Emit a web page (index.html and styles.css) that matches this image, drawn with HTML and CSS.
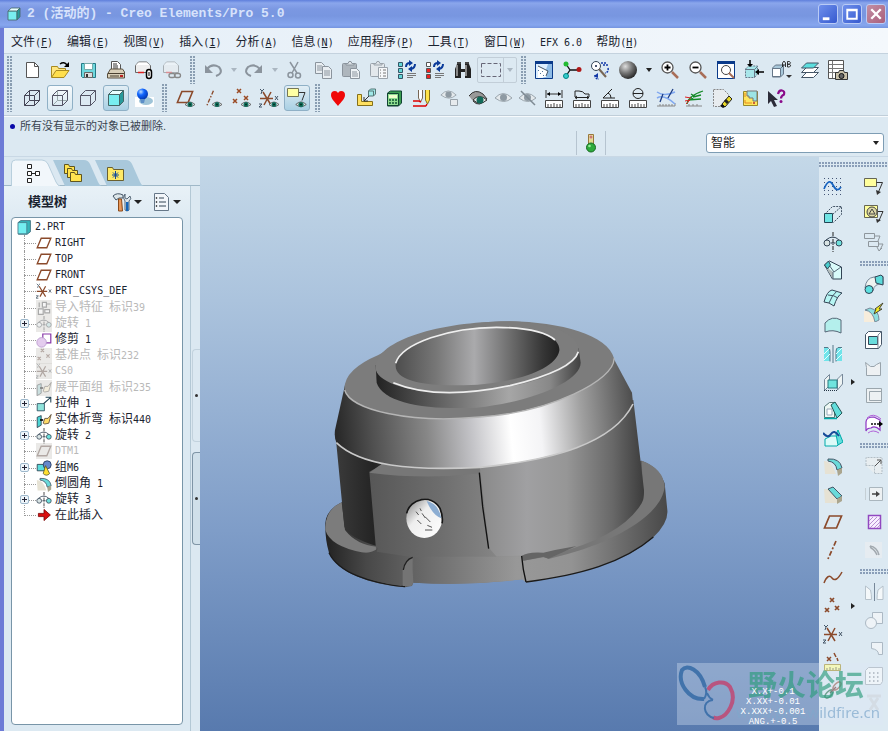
FILE: index.html
```html
<!DOCTYPE html>
<html lang="zh-CN">
<head>
<meta charset="utf-8">
<title>2 (活动的) - Creo Elements/Pro 5.0</title>
<link rel="stylesheet" href="styles.css">
</head>
<body>
<svg class="defs" aria-hidden="true">
<defs>
<radialGradient id="gBall" cx=".35" cy=".3" r=".75"><stop offset="0" stop-color="#ddd"/><stop offset=".5" stop-color="#777"/><stop offset="1" stop-color="#222"/></radialGradient>
<radialGradient id="gBlue" cx=".35" cy=".3" r=".75"><stop offset="0" stop-color="#bdf"/><stop offset=".4" stop-color="#16f"/><stop offset="1" stop-color="#03a"/></radialGradient>
</defs>
<symbol id="eye" viewBox="0 0 12 8"><path d="M0 4Q6-2 12 4Q6 9 0 4Z" fill="#dfe8e8" stroke="#555"/><circle cx="6" cy="4" r="3" fill="#147060"/><circle cx="6" cy="4" r="1.2" fill="#032"/></symbol>
<symbol id="new" viewBox="0 0 20 20"><path d="M4.500 2.500h8l4 4v11h-12z" fill="#fff" stroke="#555"/><path d="M12.500 2.500v4h4" fill="none" stroke="#555"/></symbol>
<symbol id="open" viewBox="0 0 20 20"><path d="M1.500 17V6.500h6l1 2h7V11" fill="#ffe680" stroke="#a88a20"/><path d="M1.500 17.500L6 10.500h13l-5 7z" fill="#ffdf4d" stroke="#a88a20"/><path d="M10 4q4-3 7 1" fill="none" stroke="#000" stroke-width="1.500"/><path d="M19 2v5h-5z"/></symbol>
<symbol id="save" viewBox="0 0 20 20"><path d="M3.500 3.500h14v14h-13l-1-1z" fill="#6fd8de" stroke="#247a86"/><path d="M6.500 3.500h8v6h-8z" fill="#fff" stroke="#7aa"/><path d="M6.500 12.500h8v5h-8z" fill="#ddd" stroke="#666"/><path d="M8 14h2v3H8z" fill="#333"/></symbol>
<symbol id="print" viewBox="0 0 20 20"><path d="M5.500 9V1.500h6l3 3V9" fill="#fff" stroke="#555"/><path d="M7 4h4M7 6h5M7 8h5" stroke="#333"/><path d="M1.500 14l3-5h12l2 3v6h-17z" fill="#d8cfb8" stroke="#5a5040"/><path d="M2 13.500h16M4 16h9" stroke="#4a4030"/><path d="M14 15h3v2h-3z" fill="#b22"/></symbol>
<symbol id="mail" viewBox="0 0 20 20"><path d="M1.500 12.500V5.500l3-3.500h8l4 3.500v7z" fill="#eee" stroke="#666"/><path d="M2 5l2.500-2.500h8L16 5z" fill="#fff"/><path d="M4 12.500h6" stroke="#d22" stroke-width="1.500"/></symbol>
<symbol id="mailclip" viewBox="0 0 20 20"><use href="#mail" width="20" height="20"/><rect x="12.500" y="9.500" width="5" height="9" rx="2.500" fill="#fff" stroke="#000" stroke-width="1.500"/><path d="M15 12v4" stroke="#000"/></symbol>
<symbol id="maillink" viewBox="0 0 20 20"><g opacity=".45"><use href="#mail" width="20" height="20"/></g><rect x="7" y="13.500" width="6" height="4" rx="2" fill="none" stroke="#888" stroke-width="1.300"/><rect x="12.500" y="13.500" width="6" height="4" rx="2" fill="none" stroke="#888" stroke-width="1.300"/></symbol>
<symbol id="undo" viewBox="0 0 20 20"><path d="M4 9q5-6 12-2q5 6-3 9" fill="none" stroke="#8b949d" stroke-width="2"/><path d="M2 5v8h8z" fill="#8b949d"/></symbol>
<symbol id="cut" viewBox="0 0 20 20"><g fill="none" stroke="#8b949d" stroke-width="1.500"><path d="M5 2l7 11M13 2L7 13"/><circle cx="5.500" cy="15" r="2.500"/><circle cx="13" cy="15.500" r="2.500"/></g></symbol>
<symbol id="copy" viewBox="0 0 20 20"><g fill="#e9eef2" stroke="#8b949d"><path d="M2.500 2.500h6l3 3v8h-9z"/><path d="M4 6h5M4 8h5M4 10h5"/><path d="M9.500 6.500h6l3 3v9h-9z"/><path d="M11 11h6M11 13h6M11 15h6"/></g></symbol>
<symbol id="paste" viewBox="0 0 20 20"><g stroke="#8b949d"><rect x="1.500" y="3.500" width="14" height="13" rx="1" fill="#aeb6bd"/><path d="M5 5V3.500h2l1-2h2l1 2h2V5z" fill="#dde3e8"/><path d="M9.500 8.500h6l3 3v7h-9z" fill="#eef2f5"/><path d="M11 12h5M11 14h6M11 16h6"/></g></symbol>
<symbol id="paste2" viewBox="0 0 20 20"><g stroke="#9aa3ab"><rect x="1.500" y="3.500" width="14" height="13" rx="1" fill="#e3e8ec"/><path d="M5 5V3.500h2l1-2h2l1 2h2V5z" fill="#dde3e8"/><path d="M9.500 7.500h9v11h-9z" fill="#f6f8fa"/><path d="M11 10h1M14 10h3M11 13h1M14 13h3M11 16h1M14 16h3" stroke="#777"/></g></symbol>
<symbol id="regenbase" viewBox="0 0 20 20"><path d="M9 7q0-4 4-4M18 4q0 4-4 5" fill="none" stroke="#0a3a9a" stroke-width="2"/><path d="M12 0l4 3-4 3zM15 6v6l-4-3z" fill="#0a3a9a"/><path d="M10 13.500h9M10 15.500h9M10 17.500h6" stroke="#777"/></symbol>
<symbol id="regen" viewBox="0 0 20 20"><g fill="#62d6d6" stroke="#356"><path d="M1.500 2.500h4v4h-4zM1.500 8.500h4v4h-4zM1.500 14.500h4v4h-4z"/></g><use href="#regenbase" width="20" height="20"/></symbol>
<symbol id="regen2" viewBox="0 0 20 20"><g stroke="#555"><path fill="#fff" d="M1.500 2.500h4v4h-4z"/><path fill="#e22" d="M1.500 8.500h4v4h-4zM1.500 14.500h4v4h-4z"/></g><use href="#regenbase" width="20" height="20"/></symbol>
<symbol id="find" viewBox="0 0 20 20"><path d="M2 18V9l2-5h4v5h4V4h4l2 5v9h-6v-6H8v6z" fill="#222"/><path d="M4 5v11M13 5v11" stroke="#aaa" stroke-width="1.500"/><path d="M4 3h4M12 3h4" stroke="#444" stroke-width="2"/></symbol>
<symbol id="marquee" viewBox="0 0 20 20"><path d="M.5 3.500h19v13H.5z" fill="none" stroke="#667" stroke-dasharray="4 2"/></symbol>
<symbol id="repaint" viewBox="0 0 20 20"><path d="M1.500 1.500h17v17h-17z" fill="#dceeff" stroke="#0a3a8a"/><path d="M1 1h18v3H1z" fill="#0a3a8a"/><path d="M14 4h4v14H9z" fill="#8fbce6"/><path d="M4 6l10 5-2 6-8 1z" fill="#fff"/><path d="M4 6l10 5-2 5" fill="none" stroke="#456"/><path d="M4 10l1 1M6 13l1 1M8 11l1 1M9 15l1 1" stroke="#579"/></symbol>
<symbol id="spin" viewBox="0 0 20 20"><path d="M4 4l4 6-4 6M8 10h9" fill="none" stroke="#111" stroke-width="1.300"/><circle cx="4" cy="4" r="2.500" fill="#2b3"/><circle cx="4" cy="16" r="2.500" fill="#3cc" stroke="#088"/><circle cx="17" cy="9.500" r="2.500" fill="#b01818"/></symbol>
<symbol id="orient" viewBox="0 0 20 20"><circle cx="6" cy="6" r="4.500" fill="#fff" stroke="#345"/><circle cx="6" cy="6" r="1" fill="#124"/><path d="M9 9l7 8" stroke="#765" stroke-width="2"/><path d="M11 3h6M13 5h5M18 8q1 4-3 5M5 15q0 4 4 4" stroke="#1238a8" stroke-dasharray="2 1" fill="none" stroke-width="1.500"/><path d="M4 16l4-3v5z" fill="#1238a8"/></symbol>
<symbol id="shade" viewBox="0 0 20 20"><circle cx="10" cy="10" r="9" fill="url(#gBall)"/></symbol>
<symbol id="lens" viewBox="0 0 20 20"><circle cx="7.500" cy="7.500" r="5.500" fill="#fff" stroke="#555" stroke-width="1.300"/><path d="M12 12l6 6" stroke="#a86e58" stroke-width="2.500"/></symbol>
<symbol id="zoomin" viewBox="0 0 20 20"><use href="#lens" width="20" height="20"/><path d="M4.500 7.500h6M7.500 4.500v6" stroke="#000" stroke-width="1.800"/></symbol>
<symbol id="zoomout" viewBox="0 0 20 20"><use href="#lens" width="20" height="20"/><path d="M4.500 7.500h6" stroke="#000" stroke-width="1.800"/></symbol>
<symbol id="refit" viewBox="0 0 20 20"><path d="M1.500 1.500h17v17h-17z" fill="#fff" stroke="#0a3a8a"/><path d="M1 1h18v3H1z" fill="#0a3a8a"/><circle cx="10" cy="10" r="4.500" fill="#fff" stroke="#444"/><path d="M13 13l5 5" stroke="#a86e58" stroke-width="2"/></symbol>
<symbol id="named" viewBox="0 0 20 20"><path d="M1.500 9l3-3h9v8l-3 3.500h-9z" fill="#a8e6ea" stroke="#678" stroke-dasharray="2 1"/><path d="M1.500 9.500h9v8M10.500 9.500l3-3" fill="none" stroke="#678"/><path d="M6 0v6M13 12h7" stroke="#000" stroke-width="1.500"/><path d="M3 4h6L6 7zM15 9v6l-4-3z"/></symbol>
<symbol id="viewmgr" viewBox="0 0 20 20"><path d="M.5 8l3-3h8v9l-3 3h-8z" fill="#a8c8da" stroke="#678"/><path d="M.5 8.500h8v8h-8zM8.500 8.500l3-3" fill="#fff" stroke="#678"/><path d="M10.500 7V3l1.500-2 1.500 2v4M10.500 5h3M15.500 7V1.500h2q2 1.300 0 2.700h-2q5 .3 2 2.800z" fill="none" stroke="#222" stroke-width=".9"/><path d="M14 15h6l-3 3z" fill="#333"/></symbol>
<symbol id="layers" viewBox="0 0 20 20"><g fill="#fff" stroke="#456"><path d="M1.500 17.500l5-5h12l-5 5z"/><path d="M1.500 12.500l5-5h12l-5 5z"/><path d="M1.500 8l5-5h12l-5 5z" fill="#5cdede"/></g></symbol>
<symbol id="table" viewBox="0 0 20 20"><path d="M.5 .500h15v18H.5z" fill="#fff" stroke="#555"/><path d="M4.500 1v17M1 4.500h14M1 8.500h14M1 12.500h14" stroke="#777"/><path d="M7.500 12.500h3l1-2h4l1 2h3v7h-12z" fill="#c8c0a8" stroke="#333"/><circle cx="13.500" cy="16" r="2.500" fill="#666" stroke="#111"/></symbol>
<symbol id="wire" viewBox="0 0 20 20"><path d="M2.500 7.500h10v10h-10zM7.500 2.500h10v10h-10zM2.500 7.500l5-5M12.500 7.500l5-5M2.500 17.500l5-5M12.500 17.500l5-5" fill="none" stroke="#445"/></symbol>
<symbol id="hidden" viewBox="0 0 20 20"><path d="M7.500 3v9.500h10M3 17l4.500-4.500" fill="none" stroke="#9aa"/><path d="M2.500 7.500h10v10h-10zl5-5h10l-5 5M17.500 2.500v10l-5 5" fill="none" stroke="#556"/></symbol>
<symbol id="nohidden" viewBox="0 0 20 20"><path d="M2.500 7.500h10v10h-10zl5-5h10l-5 5M17.500 2.500v10l-5 5" fill="none" stroke="#556"/></symbol>
<symbol id="solid" viewBox="0 0 20 20"><path d="M2.500 6.500l4-4h11l-4 4z" fill="#e8ffff" stroke="#466"/><path d="M13.500 6.500l4-4v11l-4 4z" fill="#289a9a" stroke="#466"/><path d="M2.500 6.500h11v11h-11z" fill="#78eef0" stroke="#466"/></symbol>
<symbol id="real" viewBox="0 0 20 20"><path d="M1 9h19v10H1z" fill="#fff"/><ellipse cx="12" cy="13" rx="7" ry="4" fill="#9fc4d8"/><circle cx="8.500" cy="6" r="5.500" fill="url(#gBlue)"/><path d="M6 11h5l-1 4H7z" fill="#5c8ec8"/></symbol>
<symbol id="plane" viewBox="0 0 20 20"><path d="M6.500 4h12l-5 12h-12z" fill="none" stroke="#8b4a2b" stroke-width="1.700"/></symbol>
<symbol id="axis" viewBox="0 0 20 20"><path d="M13 1L5 19" stroke="#8b4a2b" stroke-width="1.700" stroke-dasharray="5 2 2 2"/></symbol>
<symbol id="points" viewBox="0 0 20 20"><path d="M6 1l4 4M10 1l-4 4M2 11l4 4M6 11l-4 4M13 8l4 4M17 8l-4 4" stroke="#9a4a24" stroke-width="1.500"/></symbol>
<symbol id="csys" viewBox="0 0 20 20"><path d="M1 10.500h13M4 4l8 13M12 4L5 17" stroke="#8b4a2b" stroke-width="1.500"/><path d="M1 1l2 2 2-2M3 3l-1 3M16 8l3 4M19 8l-3 4M0 16h3l-3 3h3" stroke="#456" fill="none"/></symbol>
<symbol id="planeeye" viewBox="0 0 20 20"><use href="#plane" width="20" height="18"/><use href="#eye" x="10" y="13" width="10" height="7"/></symbol>
<symbol id="axiseye" viewBox="0 0 20 20"><use href="#axis" width="16" height="20"/><use href="#eye" x="9" y="13" width="10" height="7"/></symbol>
<symbol id="pointseye" viewBox="0 0 20 20"><use href="#points" width="20" height="20"/><use href="#eye" x="10" y="13" width="10" height="7"/></symbol>
<symbol id="csyseye" viewBox="0 0 20 20"><use href="#csys" width="20" height="20"/><use href="#eye" x="10" y="13" width="10" height="7"/></symbol>
<symbol id="note" viewBox="0 0 20 20"><path d="M.5 2.500h12v8H.5z" fill="#ffff9c" stroke="#665"/><path d="M12.500 6.500h6L14 17" fill="none" stroke="#333"/><path d="M12 14l1 5 4-3z" fill="#333"/></symbol>
<symbol id="noteeye" viewBox="0 0 20 20"><path d="M.5 .500h11v8H.5z" fill="#ffffa4" stroke="#775"/><path d="M12 4.500h6l-3 8" fill="none" stroke="#333"/><use href="#eye" x="8" y="13" width="12" height="7"/></symbol>
<symbol id="heart" viewBox="0 0 20 20"><path d="M10 18C7 14 3 11 3 7q0-4 4-4 2 0 3 2 1-2 3-2 4 0 4 4c0 4-4 7-7 11z" fill="#f00808"/></symbol>
<symbol id="asm" viewBox="0 0 20 20"><path d="M1.500 6.500h4v7h11v4h-15z" fill="#ffe060" stroke="#85701a"/><path d="M12.500 3l2-2h5v5l-2 2h-5z" fill="#a0e8e8" stroke="#577"/><path d="M12.500 3h5v5" fill="none" stroke="#577"/><path d="M13 8l-5 5M8 9v4h4" fill="none" stroke="#333"/></symbol>
<symbol id="calc" viewBox="0 0 20 20"><path d="M3.500 5l3-2h11v12l-3 3h-11z" fill="#3b9c50" stroke="#143"/><path d="M3.500 5.500h11v12h-11z" fill="#8fdc90" stroke="#143"/><path d="M5 7h8v3H5z" fill="#efffcc"/><path d="M5 12h2M8 12h2M11 12h2M5 15h2M8 15h2M11 15h2" stroke="#153" stroke-width="1.500"/></symbol>
<symbol id="pens" viewBox="0 0 20 20"><path d="M6.500 2v8l2 4 2-4V2" fill="#fff" stroke="#765"/><path d="M13.500 2v10l2 4 2-4V2" fill="#ffe348" stroke="#86701a"/><path d="M1 13h6M1 18h13M7 13l2 1M14 18l1-2" stroke="#d00" stroke-width="1.500"/></symbol>
<symbol id="eyegray" viewBox="0 0 20 20"><path d="M1 10q8-9 17 0q-8 7-17 0z" fill="#e4e9ec" stroke="#9aa5ad"/><circle cx="9.500" cy="9.500" r="3.500" fill="#8e9aa3"/></symbol>
<symbol id="eyelock" viewBox="0 0 20 20"><use href="#eyegray" y="-2" width="18" height="18"/><path d="M10.500 11.500h7v6h-7z" fill="#e6eaed" stroke="#98a2aa"/></symbol>
<symbol id="eyedark" viewBox="0 0 20 20"><path d="M1 8q6-8 14-2l4 5q-8 9-14 2" fill="#999" stroke="#333"/><path d="M5 12q6-7 14 0-7 6-14 0z" fill="#e8e8e8" stroke="#333"/><circle cx="12" cy="12" r="3.500" fill="#126a5a"/></symbol>
<symbol id="eyecross" viewBox="0 0 20 20"><use href="#eyegray" width="20" height="20"/><path d="M3 3l14 14" stroke="#7e8a93" stroke-width="1.500"/></symbol>
<symbol id="ruler" viewBox="0 0 20 20"><path d="M1.500 12.500h17v7h-17z" fill="#fff" stroke="#444"/><path d="M4 19v-3M7 19v-3M10 19v-4M13 19v-3M16 19v-3" stroke="#444"/></symbol>
<symbol id="mdist" viewBox="0 0 20 20"><use href="#ruler" width="20" height="20"/><path d="M2 2v8M18 2v8M3 6h14" stroke="#333"/><path d="M3 6l3-2v4zM17 6l-3-2v4z"/></symbol>
<symbol id="mlen" viewBox="0 0 20 20"><use href="#ruler" width="20" height="20"/><path d="M3 9V3h4q4 0 6 3h4v3M3 9.500h14M5 8l-2 1.500L5 11M15 8l2 1.500-2 1.500" fill="none" stroke="#222"/></symbol>
<symbol id="mang" viewBox="0 0 20 20"><use href="#ruler" width="20" height="20"/><path d="M15 10H3L12 1M8 5q3 1 3 5" fill="none" stroke="#222"/></symbol>
<symbol id="mdia" viewBox="0 0 20 20"><use href="#ruler" width="20" height="20"/><circle cx="10" cy="5.500" r="5" fill="none" stroke="#222"/><path d="M5 5.500h10" stroke="#222"/></symbol>
<symbol id="curv" viewBox="0 0 20 20"><path d="M1 18h18v-3M4 18v-2M7 18v-2M10 18v-2M13 18v-2M16 18v-2" stroke="#888" fill="none"/><path d="M1 4q7 5 18 0M1 10q7-4 18 6" stroke="#80a8f0" fill="none" stroke-width="1.500"/><path d="M7 6L4 14M17 1l-5 9" stroke="#1d3d85" stroke-width="1.300"/></symbol>
<symbol id="comb" viewBox="0 0 20 20"><path d="M2 18h16M5 18v-2M9 18v-2M13 18v-2" stroke="#888"/><path d="M3 16q1-8 16-13M6 9l4 3M7 6l5 3M4 12l13-1M9 9l8-2" stroke="#148a28" fill="none" stroke-width="1.300"/><path d="M1 9l6 1M1 13l5-1M2 16l4-4" stroke="#d22"/></symbol>
<symbol id="erase" viewBox="0 0 20 20"><path d="M1.500 1.500h10l5 5v3l-7 9h-8z" fill="#e8ecef" stroke="#888" stroke-dasharray="2 1"/><path d="M10 16l7-8 3 3-7 8z" fill="#e8d82a" stroke="#222"/><path d="M10 16l3 3-2 1-3-2z" fill="#111"/><path d="M13 12l3 3" stroke="#222" stroke-width="3"/></symbol>
<symbol id="map" viewBox="0 0 20 20"><path d="M3.500 3.500h14v14h-14z" fill="#ffe65c" stroke="#98892a"/><path d="M7 3h10v10h-4v-3H9V8H7z" fill="#9ce4e4" stroke="#777"/><path d="M5 5v4M5 12v3h7" stroke="#e48a20" fill="none"/><circle cx="14" cy="15" r="1" fill="#b33"/></symbol>
<symbol id="help" viewBox="0 0 20 20"><path d="M2 3v13l3-3 3 6 3-1-3-6h4z" fill="#2b2b38"/><path d="M12 6q1-4 4-3.500 3 .5 2 4-3 1.500-3 4" fill="none" stroke="#8a0a8a" stroke-width="2.200"/><circle cx="15" cy="13.500" r="1.500" fill="#8a0a8a"/></symbol>
<symbol id="light" viewBox="0 0 20 20"><path d="M7.500 1.500h5v10h-5z" fill="#e7d9a0" stroke="#98793c"/><circle cx="10" cy="4" r="1.500" fill="#c77"/><circle cx="10" cy="8" r="1.500" fill="#dd8"/><circle cx="10" cy="14.500" r="4.500" fill="#2daa3c" stroke="#176a22"/><circle cx="8.500" cy="13" r="1.300" fill="#9e9"/></symbol>
<symbol id="tree" viewBox="0 0 20 20"><path d="M6.500 1.500h4v4h-4zM6.500 8.500h4v4h-4zM14.500 8.500h4v4h-4zM6.500 15.500h4v4h-4zM10.500 10.500h4" fill="#fff" stroke="#222"/></symbol>
<symbol id="folders" viewBox="0 0 20 20"><g fill="#ffe34f" stroke="#5f5520"><path d="M1.500 10.500v-9h4l1 2h5v7z"/><path d="M4.500 14.500v-9h4l1 2h5v7z"/><path d="M7.500 18.500v-9h4l1 2h6v7z"/></g></symbol>
<symbol id="fav" viewBox="0 0 20 20"><path d="M2.500 17.500v-13h5l1 2h10v11z" fill="#ffe966" stroke="#6a6030"/><path d="M10.500 8v8M7 12h7M8 9.500l5 5M13 9.500l-5 5" stroke="#114a9a"/></symbol>
<symbol id="tools" viewBox="0 0 20 20"><path d="M1 4q4-4 10-1v3H7l-3 2z" fill="#dce6ea" stroke="#456"/><path d="M6.500 7h3l1 12h-4z" fill="#e9985a" stroke="#8a4a1a"/><path d="M13 2v4l2 1 3-3q2 3-1 5v9q-2 2-4 0V9q-3-3 0-7z" fill="#dfe6ea" stroke="#567"/><path d="M14 10h2.500v9H14z" fill="#1565b8"/></symbol>
<symbol id="list" viewBox="0 0 20 20"><path d="M3.500 1.500h10l4 4v13h-14z" fill="#f2f6fa" stroke="#678"/><path d="M8 6h5M8 10h7M8 14h7" stroke="#345"/><circle cx="5.500" cy="6" r=".8"/><circle cx="5.500" cy="10" r=".8"/><circle cx="5.500" cy="14" r=".8"/></symbol>
<symbol id="sketch" viewBox="0 0 20 20"><path d="M1 2.500h19M1 6.500h19M1 10.500h19M1 14.500h19M1 18.500h19" stroke="#457" stroke-dasharray="1 3"/><path d="M1 13q5-12 9-4t8 2" fill="none" stroke="#1764c0" stroke-width="1.700"/></symbol>
<symbol id="extrude" viewBox="0 0 20 20"><path d="M1.500 10.500l8-8h9v8l-8 8M9.500 10.500l9-8" fill="none" stroke="#456" stroke-dasharray="2 1"/><path d="M1.500 9.500h8v9h-8z" fill="#6fe4e4" stroke="#245"/></symbol>
<symbol id="extrudearrow" viewBox="0 0 20 20"><path d="M9 10l9-8M12 1.500h6.500V8" fill="none" stroke="#245" stroke-width="1.300"/><path d="M1.500 9.500h9v9h-9z" fill="#8fe4dc" stroke="#245"/></symbol>
<symbol id="revolve" viewBox="0 0 20 20"><path d="M10 0v20" stroke="#222" stroke-dasharray="4 1 1 1"/><circle cx="4" cy="11" r="3" fill="#d9e4e4" stroke="#345"/><circle cx="16" cy="11" r="3" fill="#6fe0dc" stroke="#345"/><path d="M3 8q7-6 13 0" fill="none" stroke="#345"/><path d="M8 11h4" stroke="#234"/></symbol>
<symbol id="blend" viewBox="0 0 20 20"><path d="M1.500 5l5-4 12 6v12h-9z" fill="#d9fbfa" stroke="#345"/><path d="M2 6l8 6v7z" fill="#b3bcbc"/><path d="M6 5l5 7M11 12l7-5M10 12v7" fill="none" stroke="#567"/><path d="M1.500 5l4-4 2 4-3 4z" fill="#48cccc" stroke="#345"/></symbol>
<symbol id="surf" viewBox="0 0 20 20"><path d="M1 14q3-11 8-12l10 3q-5 3-8 13-5-4-10-4z" fill="#b6f5f3" stroke="#345"/><path d="M5 7q6 0 10 3M14 3q-5 4-8 12" fill="none" stroke="#456"/></symbol>
<symbol id="dome" viewBox="0 0 20 20"><path d="M2 16V7q7-8 16-3v13q-8-4-16-1z" fill="#b4efec" stroke="#567"/></symbol>
<symbol id="holes" viewBox="0 0 20 20"><path d="M1 4h6v13H1zM13 4h6v13h-6z" fill="#70e4ea"/><path d="M1 3.500h4q2 1 2 4v10M19 3.500h-4q-2 1-2 4v10M10 1v18" fill="none" stroke="#578"/><path d="M1 16l6-6M1 10l6-6M13 16l6-6M13 10l6-6" stroke="#e5ffff"/></symbol>
<symbol id="shellbox" viewBox="0 0 20 20"><path d="M1.500 7.500l5-5v11l-5 5zM14.500 7l5-5v10l-5 6z" fill="#eef4f4" stroke="#789"/><path d="M5 8h9v8H5z" fill="#70e4de" stroke="#287a80"/><path d="M1 18.500h13" stroke="#234" stroke-dasharray="1 1"/></symbol>
<symbol id="draft" viewBox="0 0 20 20"><path d="M1.500 6.500l5-4h5v15h-10z" fill="#eef8f4" stroke="#577"/><path d="M8 5l4-3 7 11-5 5z" fill="#62dedc" stroke="#255"/><path d="M1 18.500h13" stroke="#0aa" stroke-width="1.500"/><path d="M4 9h5v6H4z" fill="#fff" stroke="#9ab"/></symbol>
<symbol id="draft2" viewBox="0 0 20 20"><path d="M2 11l6-3h5l5 6-4 4H2z" fill="#dcfaf8" stroke="#0aa"/><path d="M13 6l2-4 5 12-5 3z" fill="#62dedc" stroke="#0aa"/><path d="M0 5q5 6 8 1t8 2" fill="none" stroke="#164a98" stroke-width="2"/></symbol>
<symbol id="round" viewBox="0 0 20 20"><path d="M1 5q8 0 12 13H2z" fill="#e6e2d4"/><path d="M5 3q12-1 14 9l-5 2Q13 6 5 5z" fill="#6adada" stroke="#456"/><path d="M14 14l5-2v5l-4 3z" fill="#aaa58e"/></symbol>
<symbol id="chamfer" viewBox="0 0 20 20"><path d="M1 5h5l8 8v6H2z" fill="#e6e2d4"/><path d="M5 5l5-2 9 9-5 3z" fill="#6adada" stroke="#456"/><path d="M14 15l5-3v5l-5 3z" fill="#aaa58e"/></symbol>
<symbol id="curve" viewBox="0 0 20 20"><path d="M1 15q4-10 8-5t10-6" fill="none" stroke="#8b4a2b" stroke-width="1.500"/></symbol>
<symbol id="pts3" viewBox="0 0 20 20"><path d="M7 2l4 4M11 2l-4 4M2 12l4 4M6 12l-4 4M12 10l4 4M16 10l-4 4" stroke="#8b4a2b" stroke-width="1.700"/></symbol>
<symbol id="measure" viewBox="0 0 20 20"><path d="M4 5l4 4M8 5l-4 4M11 1l2 4M14 6l1 3" stroke="#8b4a2b" stroke-width="1.500"/><path d="M1.500 12.500h16v6h-16z" fill="#ffff9c" stroke="#a8983a"/><path d="M4 18v-2M7 18v-3M10 18v-2M13 18v-3M16 18v-2" stroke="#775"/></symbol>
<symbol id="chain" viewBox="0 0 20 20"><g fill="none" stroke-width="1.500"><ellipse cx="6" cy="14" rx="5" ry="2.500" transform="rotate(-45 6 14)" stroke="#3a7a5a"/><ellipse cx="14" cy="6" rx="5" ry="2.500" transform="rotate(-45 14 6)" stroke="#a06a5a"/><path d="M7 13l6-6" stroke="#744"/></g></symbol>
<symbol id="notecirc" viewBox="0 0 20 20"><path d="M.5 1.500h13v12H.5z" fill="#ffff9c" stroke="#665"/><circle cx="8" cy="8" r="5" fill="#ddd8a8" stroke="#444"/><path d="M5 10l3-5 3 5z" fill="none" stroke="#444"/><path d="M14 7.500h5l-4 9" fill="none" stroke="#333"/><path d="M12 15l1 4 4-3z" fill="#333"/></symbol>
<symbol id="notes2" viewBox="0 0 20 20"><g fill="none" stroke="#8e969c"><path d="M.5 1.500h10v5H.5zM4.500 9.500h10v5h-10zM11 4h5l-2 5M15 12h4l-3 6M13 15l2 4 3-3"/></g></symbol>
<symbol id="pipe" viewBox="0 0 20 20"><path d="M1 14q1-10 9-11l9-1v8q-9-1-10 7z" fill="#eef2f0" stroke="#789"/><path d="M11 3l6-2 2 2v8l-7-2z" fill="#5cdada" stroke="#345"/><circle cx="5" cy="15.500" r="4" fill="#5ce0e0" stroke="#345"/></symbol>
<symbol id="roundy" viewBox="0 0 20 20"><path d="M0 9q10 0 12 11H0z" fill="#f7eddc"/><path d="M1 8l5-2q9 2 9 12l-4 2Q9 9 1 8z" fill="#8edfe0" stroke="#789"/><path d="M19 1l-4 6h3l-8 5 2-5h-1z" fill="#f5ee22" stroke="#443"/></symbol>
<symbol id="shell" viewBox="0 0 20 20"><path d="M1.500 4.500l3-3h13v13l-3 4h-13z" fill="#fff" stroke="#456"/><path d="M4.500 6.500h9v8h-9z" fill="#6adcdc" stroke="#345"/><path d="M14 5v13M14 5l3-3" stroke="#789"/></symbol>
<symbol id="gwave" viewBox="0 0 20 20"><path d="M2.500 17.500v-8l-1-5 5 4q4 1 6-2l4-2v13z" fill="#eef1f3" stroke="#99a4ac"/></symbol>
<symbol id="gbox" viewBox="0 0 20 20"><path d="M2.500 2.500h15v14h-15zM5.500 5.500h12v9h-12z" fill="#edf1f3" stroke="#9ba6ad"/></symbol>
<symbol id="wrap" viewBox="0 0 20 20"><path d="M2 17V8q0-5 8-5l6 3v10q-5-5-9-2-4 0-5 3z" fill="#fff" stroke="#8e34c4" stroke-width="1.200"/><path d="M3 4q6-6 14 1M4 19q5-4 11 0" fill="none" stroke="#b060d8"/><path d="M7 10h10" stroke="#111" stroke-width="1.500" stroke-dasharray="2 1"/><path d="M15 7l4 3-4 3z"/></symbol>
<symbol id="gext" viewBox="0 0 20 20"><path d="M1.500 9.500h9v8M2 9V1.500h16v16h-7" fill="#e7edf0" stroke="#b3bec6" stroke-dasharray="2 1"/><path d="M11 10l6-6M13 4h4v4" fill="none" stroke="#555"/></symbol>
<symbol id="gmove" viewBox="0 0 20 20"><path d="M5.500 3.500h13v13h-13z" fill="#edf1f3" stroke="#aab6be"/><path d="M1.500 4v12" stroke="#c5cfd5"/><path d="M8 10h6" stroke="#444" stroke-width="1.500"/><path d="M12 7l4 3-4 3z" fill="#444"/></symbol>
<symbol id="hatch" viewBox="0 0 20 20"><path d="M4.500 3.500h12v13h-12z" fill="#f8efff" stroke="#9148c0" stroke-width="1.500"/><path d="M5 9l4-4M5 13l8-8M6 16L16 6M10 16l6-6M13 16l3-3" stroke="#b890d4"/></symbol>
<symbol id="garc" viewBox="0 0 20 20"><path d="M1 2h17v16H1z" fill="#e6ecf1"/><path d="M6 6q7 1 9 9M6 6l1 2q4 2 6 7" fill="none" stroke="#a2a9af" stroke-width="1.500"/></symbol>
<symbol id="gmirror" viewBox="0 0 20 20"><path d="M1.500 17.500V4l5 4q1 4 1 9.500zM19 17.500V4l-5 4q-1 4-1 9.500z" fill="#f4f8fa" stroke="#b6c2cb"/><path d="M10.500 1v18" stroke="#789"/></symbol>
<symbol id="gmerge" viewBox="0 0 20 20"><path d="M8.500 2.500h10v11h-10z" fill="#eef3f7" stroke="#acb9c4"/><circle cx="7" cy="13" r="5.500" fill="#eef3f7" stroke="#acb9c4"/></symbol>
<symbol id="gtrim" viewBox="0 0 20 20"><path d="M7.500 4.500h11v12h-4q0-5-7-6z" fill="#eef3f7" stroke="#acb9c4"/></symbol>
<symbol id="gpattern" viewBox="0 0 20 20"><path d="M1.500 4.500l3-3h14v14l-2 3h-15z" fill="#f8fafb" stroke="#aab3ba"/><path d="M5 7h10M5 11h10M5 15h10" stroke="#8d98a0" stroke-width="1.500" stroke-dasharray="1.500 2.500"/></symbol>
<symbol id="gx" viewBox="0 0 20 20"><path d="M3 2h14M6 4l8 12M14 4L6 16" stroke="#cfd6db" stroke-width="3"/></symbol>
<symbol id="part" viewBox="0 0 20 20"><path d="M3 4l3-2h12v14l-4 3H3z" fill="#36b4b8" stroke="#367"/><path d="M2.500 4.500h11v14h-11z" fill="#74eef0" stroke="#478"/></symbol>
<symbol id="merge" viewBox="0 0 20 20"><path d="M8.500 2.500h10v11h-10z" fill="#fff" stroke="#8838a8" stroke-width="1.500"/><circle cx="7" cy="13" r="6" fill="#e4ccee" stroke="#b898cc"/></symbol>
<symbol id="bend" viewBox="0 0 20 20"><path d="M1.500 6.500l5-2v12l-5 3z" fill="#4cd4d4" stroke="#234"/><path d="M5 10h4" stroke="#000" stroke-width="2"/><path d="M9 14l2-6h4l4-5-3 11-5 1z" fill="#ffdc6a" stroke="#543"/></symbol>
<symbol id="group" viewBox="0 0 20 20"><path d="M1.500 5.500h10v8h-10z" fill="#5cdcdc" stroke="#234"/><circle cx="14" cy="6" r="5" fill="#6688cc" stroke="#235"/><path d="M12 7l5 10q-4 4-8 0z" fill="#ffe030" stroke="#553"/></symbol>
<symbol id="insert" viewBox="0 0 20 20"><path d="M3 8h7V3l8 7-8 7v-5H3z" fill="#d81010" stroke="#700"/></symbol>
<symbol id="import" viewBox="0 0 20 20"><path d="M8 3h5v6H8zM13 5h5M3 11h6v7H3zM11 12h6v4h-6zM4 3v6" fill="#eee" stroke="#555" stroke-width="1.500"/></symbol>
</svg>

<header class="titlebar">
  <svg class="appicon"><use href="#solid"/></svg>
  <h1>2 (活动的) - Creo Elements/Pro 5.0</h1>
  <button class="win" aria-label="最小化"><svg viewBox="0 0 19 19"><path d="M4 13h7v3H4z" fill="#fff"/></svg></button>
  <button class="win" aria-label="最大化"><svg viewBox="0 0 19 19"><path d="M4.500 5h10v9.500h-10zM4 5.500h11" fill="none" stroke="#fff" stroke-width="2"/></svg></button>
  <button class="win close" aria-label="关闭"><svg viewBox="0 0 19 19"><path d="M4.500 4.500l10 10M14.500 4.500l-10 10" stroke="#fff" stroke-width="2.500"/></svg></button>
</header>

<div class="frame">
<nav class="menu">
  <button>文件<span>(<u>F</u>)</span></button><button>编辑<span>(<u>E</u>)</span></button><button>视图<span>(<u>V</u>)</span></button><button>插入<span>(<u>I</u>)</span></button><button>分析<span>(<u>A</u>)</span></button><button>信息<span>(<u>N</u>)</span></button><button>应用程序<span>(<u>P</u>)</span></button><button>工具<span>(<u>T</u>)</span></button><button>窗口<span>(<u>W</u>)</span></button><button><span>EFX 6.0</span></button><button>帮助<span>(<u>H</u>)</span></button>
</nav>

<div class="bars">
<div class="bar">
  <i class="grip first"></i>
  <button class="tb" aria-label="新建"><svg><use href="#new"/></svg></button>
  <button class="tb" aria-label="打开"><svg><use href="#open"/></svg></button>
  <button class="tb" aria-label="保存"><svg><use href="#save"/></svg></button>
  <button class="tb" aria-label="打印"><svg><use href="#print"/></svg></button>
  <button class="tb" aria-label="发送附件"><svg><use href="#mailclip"/></svg></button>
  <button class="tb" aria-label="发送链接"><svg><use href="#maillink"/></svg></button>
  <i class="grip"></i>
  <button class="tb" aria-label="撤消"><svg><use href="#undo"/></svg></button>
  <button class="drop dim" aria-label="撤消列表"></button>
  <button class="tb flip" aria-label="重做"><svg><use href="#undo"/></svg></button>
  <button class="drop dim" aria-label="重做列表"></button>
  <button class="tb" aria-label="剪切"><svg><use href="#cut"/></svg></button>
  <button class="tb" aria-label="复制"><svg><use href="#copy"/></svg></button>
  <button class="tb" aria-label="粘贴"><svg><use href="#paste"/></svg></button>
  <button class="tb" aria-label="选择性粘贴"><svg><use href="#paste2"/></svg></button>
  <button class="tb" aria-label="再生"><svg><use href="#regen"/></svg></button>
  <button class="tb" aria-label="再生管理器"><svg><use href="#regen2"/></svg></button>
  <button class="tb" aria-label="查找"><svg><use href="#find"/></svg></button>
  <span class="split"><button class="tb" aria-label="框选"><svg><use href="#marquee"/></svg></button><button class="drop dim" aria-label="框选列表"></button></span>
  <i class="grip"></i>
  <button class="tb" aria-label="重画"><svg><use href="#repaint"/></svg></button>
  <button class="tb" aria-label="旋转中心"><svg><use href="#spin"/></svg></button>
  <button class="tb" aria-label="定向模式"><svg><use href="#orient"/></svg></button>
  <button class="tb" aria-label="外观库"><svg><use href="#shade"/></svg></button>
  <button class="drop" aria-label="外观列表"></button>
  <button class="tb" aria-label="放大"><svg><use href="#zoomin"/></svg></button>
  <button class="tb" aria-label="缩小"><svg><use href="#zoomout"/></svg></button>
  <button class="tb" aria-label="重新调整"><svg><use href="#refit"/></svg></button>
  <button class="tb" aria-label="重定向"><svg><use href="#named"/></svg></button>
  <button class="tb" aria-label="视图列表"><svg><use href="#viewmgr"/></svg></button>
  <button class="tb" aria-label="层"><svg><use href="#layers"/></svg></button>
  <button class="tb" aria-label="视图管理器"><svg><use href="#table"/></svg></button>
</div>
<div class="bar">
  <i class="grip first"></i>
  <button class="tb" aria-label="线框"><svg><use href="#wire"/></svg></button>
  <button class="tb on" aria-label="隐藏线"><svg><use href="#hidden"/></svg></button>
  <button class="tb" aria-label="消隐"><svg><use href="#nohidden"/></svg></button>
  <button class="tb on deep" aria-label="着色"><svg><use href="#solid"/></svg></button>
  <button class="tb" aria-label="增强的真实感"><svg><use href="#real"/></svg></button>
  <i class="grip"></i>
  <button class="tb" aria-label="平面显示"><svg><use href="#planeeye"/></svg></button>
  <button class="tb" aria-label="轴显示"><svg><use href="#axiseye"/></svg></button>
  <button class="tb" aria-label="点显示"><svg><use href="#pointseye"/></svg></button>
  <button class="tb" aria-label="坐标系显示"><svg><use href="#csyseye"/></svg></button>
  <button class="tb on deep" aria-label="注释显示"><svg><use href="#noteeye"/></svg></button>
  <i class="grip"></i>
  <button class="tb" aria-label="收藏"><svg><use href="#heart"/></svg></button>
  <button class="tb" aria-label="装配"><svg><use href="#asm"/></svg></button>
  <button class="tb" aria-label="计算"><svg><use href="#calc"/></svg></button>
  <button class="tb" aria-label="笔"><svg><use href="#pens"/></svg></button>
  <button class="tb" aria-label="锁定显示"><svg><use href="#eyelock"/></svg></button>
  <button class="tb" aria-label="显示状态"><svg><use href="#eyedark"/></svg></button>
  <button class="tb slim" aria-label="显示"><svg><use href="#eyegray"/></svg></button>
  <button class="tb slim" aria-label="隐藏"><svg><use href="#eyecross"/></svg></button>
  <button class="tb" aria-label="距离"><svg><use href="#mdist"/></svg></button>
  <button class="tb" aria-label="长度"><svg><use href="#mlen"/></svg></button>
  <button class="tb" aria-label="角度"><svg><use href="#mang"/></svg></button>
  <button class="tb" aria-label="直径"><svg><use href="#mdia"/></svg></button>
  <button class="tb" aria-label="曲率"><svg><use href="#curv"/></svg></button>
  <button class="tb" aria-label="截面"><svg><use href="#comb"/></svg></button>
  <button class="tb" aria-label="删除分析"><svg><use href="#erase"/></svg></button>
  <button class="tb" aria-label="模型检查"><svg><use href="#map"/></svg></button>
  <button class="tb slim" aria-label="帮助指针"><svg><use href="#help"/></svg></button>
</div>
</div>

<div class="message">
  <p>所有没有显示的对象已被删除.</p>
  <span class="status"><svg><use href="#light"/></svg></span>
  <label class="filter"><select aria-label="选择过滤器"><option>智能</option><option>特征</option><option>几何</option></select></label>
</div>

<div class="work">
<aside class="side">
  <div class="tabs">
    <button class="tab" aria-label="模型树"><svg class="shape" viewBox="0 0 50 27"><path d="M.5 27V5q0-4 4-4H31q4 0 6 4l8 18q2 4 4 4" fill="#f2f7fb" stroke="#b8cfdd"/></svg><svg class="ic"><use href="#tree"/></svg></button>
    <button class="tab" aria-label="文件夹浏览器"><svg class="shape" viewBox="0 0 50 27"><path d="M0 1h31q4 0 6 4l8 18q2 4 4 4H12z" fill="#a9c8db"/></svg><svg class="ic"><use href="#folders"/></svg></button>
    <button class="tab" aria-label="收藏夹"><svg class="shape" viewBox="0 0 50 27"><path d="M0 1h31q4 0 6 4l8 18q2 4 4 4H12z" fill="#a9c8db"/></svg><svg class="ic"><use href="#fav"/></svg></button>
  </div>
  <div class="panel">
    <div class="head"><h2>模型树</h2><button class="tool" aria-label="设置"><svg><use href="#tools"/></svg><i></i></button><button class="tool" aria-label="显示"><svg><use href="#list"/></svg><i></i></button></div>
    <div class="box">
      <div class="root"><svg><use href="#part"/></svg><span class="en">2.PRT</span></div>
      <ul class="list">
        <li><span class="gut"></span><svg><use href="#plane"/></svg><span class="en">RIGHT</span></li>
        <li><span class="gut"></span><svg><use href="#plane"/></svg><span class="en">TOP</span></li>
        <li><span class="gut"></span><svg><use href="#plane"/></svg><span class="en">FRONT</span></li>
        <li><span class="gut"></span><svg><use href="#csys"/></svg><span class="en">PRT_CSYS_DEF</span></li>
        <li class="off"><span class="gut"></span><svg><use href="#import"/></svg><span>导入特征<b> </b>标识<b>39</b></span></li>
        <li class="off"><span class="gut"><button aria-label="展开"></button></span><svg><use href="#revolve"/></svg><span>旋转<b> 1</b></span></li>
        <li><span class="gut"></span><svg><use href="#merge"/></svg><span>修剪<b> 1</b></span></li>
        <li class="off"><span class="gut"></span><svg><use href="#points"/></svg><span>基准点<b> </b>标识<b>232</b></span></li>
        <li class="off"><span class="gut"></span><svg><use href="#csys"/></svg><span class="en">CS0</span></li>
        <li class="off"><span class="gut"></span><svg><use href="#bend"/></svg><span>展平面组<b> </b>标识<b>235</b></span></li>
        <li><span class="gut"><button aria-label="展开"></button></span><svg><use href="#extrudearrow"/></svg><span>拉伸<b> 1</b></span></li>
        <li><span class="gut"></span><svg><use href="#bend"/></svg><span>实体折弯<b> </b>标识<b>440</b></span></li>
        <li><span class="gut"><button aria-label="展开"></button></span><svg><use href="#revolve"/></svg><span>旋转<b> 2</b></span></li>
        <li class="off"><span class="gut"></span><svg><use href="#plane"/></svg><span class="en">DTM1</span></li>
        <li><span class="gut"><button aria-label="展开"></button></span><svg><use href="#group"/></svg><span>组<b>M6</b></span></li>
        <li><span class="gut"></span><svg><use href="#round"/></svg><span>倒圆角<b> 1</b></span></li>
        <li><span class="gut"><button aria-label="展开"></button></span><svg><use href="#revolve"/></svg><span>旋转<b> 3</b></span></li>
        <li><span class="gut"></span><svg><use href="#insert"/></svg><span>在此插入</span></li>
      </ul>
    </div>
  </div>
  <div class="sash"><button aria-label="折叠浏览器"></button><button class="strong" aria-label="折叠导航器"></button></div>
</aside>

<main class="view">
  <svg class="scene" viewBox="200 157 619 574" role="img" aria-label="模型">
    <defs>
      <linearGradient id="cone" gradientUnits="userSpaceOnUse" x1="75" y1="330" x2="968" y2="250"><stop offset="0" stop-color="#292929"/><stop offset=".12" stop-color="#515151"/><stop offset=".3" stop-color="#878787"/><stop offset=".45" stop-color="#c4c4c8"/><stop offset=".58" stop-color="#fff"/><stop offset=".68" stop-color="#f4f4f6"/><stop offset=".82" stop-color="#a0a0a0"/><stop offset="1" stop-color="#4b4b4b"/></linearGradient>
      <linearGradient id="body" gradientUnits="userSpaceOnUse" x1="80" y1="0" x2="1000" y2="0"><stop offset="0" stop-color="#3a3a3a"/><stop offset=".12" stop-color="#242424"/><stop offset=".3" stop-color="#606060"/><stop offset=".46" stop-color="#888"/><stop offset=".62" stop-color="#a0a0a2"/><stop offset=".75" stop-color="#969696"/><stop offset=".9" stop-color="#686868"/><stop offset="1" stop-color="#3d3d3d"/></linearGradient>
      <linearGradient id="flat" gradientUnits="userSpaceOnUse" x1="180" y1="0" x2="640" y2="0"><stop offset="0" stop-color="#575757"/><stop offset=".45" stop-color="#6d6d6d"/><stop offset=".75" stop-color="#808080"/><stop offset="1" stop-color="#939393"/></linearGradient>
      <linearGradient id="rim" gradientUnits="userSpaceOnUse" x1="46" y1="0" x2="1072" y2="0"><stop offset="0" stop-color="#222"/><stop offset=".12" stop-color="#484848"/><stop offset=".3" stop-color="#6b6b6b"/><stop offset=".56" stop-color="#989898"/><stop offset=".72" stop-color="#939393"/><stop offset="1" stop-color="#484848"/></linearGradient>
      <linearGradient id="ring" gradientUnits="userSpaceOnUse" x1="198" y1="0" x2="812" y2="0"><stop offset="0" stop-color="#222"/><stop offset=".25" stop-color="#555"/><stop offset=".65" stop-color="#a6a6a6"/><stop offset=".85" stop-color="#888"/><stop offset="1" stop-color="#404040"/></linearGradient>
      <linearGradient id="bore" gradientUnits="userSpaceOnUse" x1="257" y1="0" x2="748" y2="0"><stop offset="0" stop-color="#4d4d4d"/><stop offset=".25" stop-color="#777"/><stop offset=".48" stop-color="#aaaaac"/><stop offset=".7" stop-color="#6d6d6d"/><stop offset=".9" stop-color="#363636"/><stop offset="1" stop-color="#202020"/></linearGradient>
      <linearGradient id="drill" x1="0" y1="0" x2="1" y2="1"><stop offset="0" stop-color="#777"/><stop offset=".4" stop-color="#eee"/><stop offset="1" stop-color="#fff"/></linearGradient>
    </defs>
    <svg x="310" y="300" width="370" height="300" viewBox="0 0 1110 900">
      <path d="M46 670Q45 720 57 758C85 820 180 852 285 862L306 858L310 848Q470 858 636 838L648 847C810 826 940 790 1030 712Q1076 668 1072 630L1064 550Q1045 500 995 482L95 607Q48 630 46 670Z" fill="url(#rim)"/>
      <path d="M57 758C85 818 180 850 285 860M648 846C810 825 940 789 1030 711" fill="none" stroke="#1b1b1b" stroke-width="4"/>
      <path d="M46 680Q48 628 95 607L105 690Q140 735 200 740Q205 765 155 757Q60 738 46 690Z" fill="#7c7c7c"/>
      <path d="M995 482Q1060 505 1064 560C1056 645 910 733 718 776L700 772L640 782L634 764L660 757L730 760L1000 600Z" fill="#777"/>
      <path d="M78 420L103 680Q115 712 200 738L205 762L280 770L540 770L730 762Q935 710 995 610Q1003 595 1002 570L970 300Z" fill="url(#body)"/>
      <path d="M178 515L215 495L510 505L538 745L560 770H636V838Q470 858 310 846L308 775Q282 775 278 815V800L200 770Z" fill="url(#flat)"/>
      <path d="M200 755L300 770L634 770V838Q470 858 310 848V772Q282 773 278 815L275 858Q180 848 110 805V757Q195 765 205 740Z" fill="url(#rim)"/>
      <path d="M278 858V810Q283 778 308 772V812L310 848L304 858Z" fill="#747474"/>
      <path d="M280 810Q284 780 308 772" fill="none" stroke="#202020" stroke-width="4"/>
      <path d="M178 518L215 492Q350 510 510 505L508 520Q350 540 178 518Z" fill="#777"/>
      <path d="M636 768Q650 755 700 758L735 750L800 738L715 776L700 770L640 782Z" fill="#656565"/>
      <path d="M508 518L518 620L536 746M635 768L640 808L648 846" fill="none" stroke="#111" stroke-width="4"/>
      <path d="M105 255L75 390Q72 415 80 430C150 498 300 515 510 502C730 480 910 430 969 310L966 278L912 178Z" fill="url(#cone)"/>
      <path d="M79 428C150 497 300 513 510 502C730 480 910 430 969 312" fill="none" stroke="#c9c9c9" stroke-width="5"/>
      <path d="M104 270Q99 210 205 165C320 100 470 65 600 64C750 66 895 105 912 175C916 240 720 337 510 351C300 371 120 330 104 270Z" fill="#7c7c7c"/>
      <path d="M104 270C120 330 300 371 510 351C720 337 916 240 912 175" fill="none" stroke="#b5b5b5" stroke-width="4"/>
      <path d="M197 195L200 248C220 310 350 330 500 323C680 303 812 240 812 188L806 145Z" fill="url(#ring)"/>
      <path d="M197 200C202 120 390 66 590 64C735 67 810 108 806 155C794 220 600 279 400 278C280 275 192 240 197 200Z" fill="#7d7d7d"/>
      <path d="M250 248C350 290 480 282 600 257C730 225 795 190 805 155" fill="none" stroke="#ededed" stroke-width="5"/>
      <path d="M257 196C260 130 420 82 560 82C690 84 752 112 748 152C736 215 590 256 440 256C320 256 255 236 257 196Z" fill="url(#bore)"/>
      <path d="M257 190C275 130 420 82 560 82C650 83 710 98 735 120" fill="none" stroke="#efefef" stroke-width="5"/>
      <ellipse cx="343" cy="655" rx="54" ry="59" fill="url(#drill)"/>
      <path d="M290 640C300 595 365 580 390 625Q400 650 396 670" fill="none" stroke="#161616" stroke-width="5"/>
      <path d="M350 603Q385 610 394 655Q367 645 350 603Z" fill="#8cadd2"/>
      <path d="M318 635l8 10M322 660l12 12M330 625l4 8M345 650l16 16M345 690h22M336 640l10 14M352 676l14 6" stroke="#555" stroke-width="3"/>
    </svg>
  </svg>
</main>

<aside class="right">
  <i class="hgrip wide"></i>
  <div class="col">
    <button class="tb" aria-label="草绘"><svg><use href="#sketch"/></svg></button>
    <button class="tb" aria-label="拉伸"><svg><use href="#extrude"/></svg></button>
    <button class="tb" aria-label="旋转"><svg><use href="#revolve"/></svg></button>
    <button class="tb" aria-label="扫描混合"><svg><use href="#blend"/></svg></button>
    <button class="tb" aria-label="边界混合"><svg><use href="#surf"/></svg></button>
    <button class="tb" aria-label="造型"><svg><use href="#dome"/></svg></button>
    <button class="tb" aria-label="孔"><svg><use href="#holes"/></svg></button>
    <button class="tb fly" aria-label="筋"><svg><use href="#shellbox"/></svg></button>
    <button class="tb" aria-label="拔模"><svg><use href="#draft"/></svg></button>
    <button class="tb" aria-label="可变拔模"><svg><use href="#draft2"/></svg></button>
    <button class="tb" aria-label="倒圆角"><svg><use href="#round"/></svg></button>
    <button class="tb" aria-label="倒角"><svg><use href="#chamfer"/></svg></button>
    <button class="tb" aria-label="基准平面"><svg><use href="#plane"/></svg></button>
    <button class="tb" aria-label="基准轴"><svg><use href="#axis"/></svg></button>
    <button class="tb" aria-label="基准曲线"><svg><use href="#curve"/></svg></button>
    <button class="tb fly" aria-label="基准点"><svg><use href="#pts3"/></svg></button>
    <button class="tb" aria-label="坐标系"><svg><use href="#csys"/></svg></button>
    <button class="tb" aria-label="分析特征"><svg><use href="#measure"/></svg></button>
    <button class="tb" aria-label="参照"><svg><use href="#chain"/></svg></button>
  </div>
  <div class="col">
    <button class="tb" aria-label="注释"><svg><use href="#note"/></svg></button>
    <button class="tb" aria-label="符号"><svg><use href="#notecirc"/></svg></button>
    <button class="tb" aria-label="传播"><svg><use href="#notes2"/></svg></button>
    <i class="hgrip"></i>
    <button class="tb" aria-label="管道"><svg><use href="#pipe"/></svg></button>
    <button class="tb" aria-label="自动倒圆角"><svg><use href="#roundy"/></svg></button>
    <button class="tb" aria-label="壳"><svg><use href="#shell"/></svg></button>
    <button class="tb" aria-label="填充"><svg><use href="#gwave"/></svg></button>
    <button class="tb" aria-label="偏移"><svg><use href="#gbox"/></svg></button>
    <button class="tb" aria-label="包络"><svg><use href="#wrap"/></svg></button>
    <i class="hgrip"></i>
    <button class="tb" aria-label="延伸"><svg><use href="#gext"/></svg></button>
    <button class="tb" aria-label="移动"><svg><use href="#gmove"/></svg></button>
    <button class="tb" aria-label="剖面"><svg><use href="#hatch"/></svg></button>
    <button class="tb" aria-label="圆弧"><svg><use href="#garc"/></svg></button>
    <i class="hgrip"></i>
    <button class="tb" aria-label="镜像"><svg><use href="#gmirror"/></svg></button>
    <button class="tb" aria-label="合并"><svg><use href="#gmerge"/></svg></button>
    <button class="tb" aria-label="修剪"><svg><use href="#gtrim"/></svg></button>
    <button class="tb" aria-label="阵列"><svg><use href="#gpattern"/></svg></button>
    <button class="tb" aria-label="删除"><svg><use href="#gx"/></svg></button>
  </div>
</aside>
<div class="brand">
  <svg class="logo" viewBox="0 0 60 60"><g fill="none"><path d="M28 24C23 6 10 1 5 7C0 20 12 37 27 36" stroke="#2f67a4" stroke-width="4"/><path d="M31 27C36 18 48 17 53 24C61 38 50 53 42 55Q38 56 36 54" stroke="#c4426e" stroke-width="4"/><path d="M36 37C24 38 26 53 37 55M30 30q2 5 6 7" stroke="#2f67a4" stroke-width="2"/><path d="M28 24q3 6-1 12" stroke="#2f67a4" stroke-width="2"/></g></svg>
  <strong>野火论坛</strong>
  <em>www.proewildfire.cn</em>
  <p class="tol">X.X+-0.1<br>X.XX+-0.01<br>X.XXX+-0.001<br>ANG.+-0.5</p>
</div>
</div>
</div>
</body>
</html>
```
FILE: styles.css
```css
* { box-sizing: border-box; }
html, body { margin: 0; height: 100%; }
body {
  display: flex;
  flex-direction: column;
  overflow: hidden;
  background: #dce9f2;
  color: #1b2430;
  font: 12px/16px "Liberation Sans", "Noto Sans CJK SC", sans-serif;
}
button { margin: 0; padding: 0; border: 0; background: none; color: inherit; font: inherit; }
.defs { position: absolute; width: 0; height: 0; }

.titlebar {
  display: flex;
  align-items: center;
  flex: none;
  height: 28px;
  padding: 0 2px 0 6px;
  gap: 4px;
  background: linear-gradient(#5f7fdc, #8aa6ec 3px, #7b98e2 9px, #7896e0 16px, #86a6ee 25px, #7494e0);
}
.appicon { width: 16px; height: 16px; }
.titlebar h1 {
  flex: 1;
  margin: 0;
  padding-left: 1px;
  color: #d7e2fb;
  font: bold 13px/20px "Liberation Mono", "Noto Sans CJK SC", monospace;
  white-space: nowrap;
}
.win {
  width: 20px;
  height: 20px;
  border: 1px solid #b9cbf6;
  border-radius: 3px;
  background: linear-gradient(135deg, #6f90ec, #3559cf);
}
.win svg { display: block; width: 18px; height: 18px; }
.close { background: linear-gradient(135deg, #c38fa4, #a95f7c); }

.frame {
  display: flex;
  flex-direction: column;
  flex: 1;
  min-height: 0;
  border-left: 4px solid #6d7bd6;
}
.menu {
  display: flex;
  align-items: center;
  flex: none;
  height: 26px;
  gap: 14px;
  padding: 4px 7px 0;
  border-bottom: 1px solid #c4d2de;
  background: linear-gradient(90deg, #e4eef7, #f4f8fc);
}
.menu button { white-space: nowrap; }
.menu span { font: 10px/16px "DejaVu Sans Mono", monospace; }

.bars { flex: none; padding-top: 2px; border-bottom: 1px solid #c0ced9; box-shadow: 0 1px #f6fafd; height: 62px; }
.bar { display: flex; align-items: center; height: 28px; }
.tb {
  position: relative;
  display: flex;
  align-items: center;
  justify-content: center;
  flex: none;
  width: 28px;
  height: 28px;
  border-radius: 3px;
}
.tb svg { width: 20px; height: 20px; }
.slim { width: 24px; }
.flip svg { transform: scaleX(-1); }
.on { background: linear-gradient(#f8fbfd, #d6e7f1) padding-box; border: 1px solid #8fb0c6; width: 26px; height: 26px; margin: 0 1px; }
.deep { background: linear-gradient(#e2eef5, #a9d0e4); }
.grip {
  flex: none;
  width: 5px;
  height: 28px;
  margin: 0 4px;
  background: radial-gradient(circle at 1px 1px, #8a9eb2 1px, transparent 1px) 0 0 / 3px 3px;
}
.first { margin: 0 6px 0 3px; }
.drop { flex: none; width: 14px; height: 28px; display: flex; align-items: center; justify-content: center; }
.drop::before, .tool i, .filter::after {
  content: "";
  border: 3px solid transparent;
  border-top: 4px solid #222;
  border-bottom: 0;
}
.dim { width: 13px; }
.dim::before { border-top-color: #aab6c1; }
.split { display: flex; align-items: center; height: 26px; border: 1px solid #c2ced8; border-radius: 2px; }
.split .tb { width: 26px; height: 24px; border-right: 1px solid #c2ced8; border-radius: 0; }
.split .drop { width: 12px; height: 24px; }

.message { display: flex; flex: none; height: 41px; border-bottom: 1px solid #c9d8e5; padding: 1px 4px 0 6px; }
.message p { display: flex; align-items: center; gap: 5px; flex: 1; height: 18px; margin: 0; font-size: 11px; white-space: nowrap; color: #3a4450; }
.message p::before { content: ""; width: 5px; height: 5px; border-radius: 50%; background: #0a0aa8; }
.status { display: flex; align-items: center; justify-content: center; width: 30px; height: 24px; margin: 14px 100px 0 0; border: solid #b6c4d0; border-width: 0 1px; }
.status svg { width: 20px; height: 20px; }
.filter { position: relative; width: 178px; height: 20px; margin-top: 16px; }
.filter select {
  width: 100%;
  height: 20px;
  padding: 0 4px;
  border: 1px solid #7e9db4;
  border-radius: 3px;
  background: #fff;
  color: #222;
  font: inherit;
  appearance: none;
}
.filter::after { position: absolute; right: 5px; top: 8px; }

.work { position: relative; display: flex; flex: 1; min-height: 0; }
.side { display: grid; grid-template: 29px 1fr / 187px 9px; flex: none; width: 196px; background: #dbe8f1; }
.tabs { display: flex; align-items: flex-end; grid-column: 1 / 3; padding-left: 7px; border-bottom: 1px solid #9fb8c8; }
.tab { position: relative; width: 42px; height: 27px; }
.tab:first-child { z-index: 1; }
.tab .shape { position: absolute; left: 0; bottom: -1px; width: 50px; height: 27px; }
.tab .ic { position: relative; display: block; width: 20px; height: 20px; margin: 2px 0 0 10px; }
.panel { display: flex; flex-direction: column; padding: 0 7px 6px; border-right: 1px solid #b3c8d5; background: linear-gradient(#e8f1f7, #dce9f2 40px); }
.head { display: flex; align-items: center; flex: none; height: 31px; padding-left: 17px; }
.head h2 { flex: 1; margin: 0; font-size: 13px; line-height: 16px; font-weight: bold; }
.tool { display: flex; align-items: center; gap: 2px; width: 39px; }
.tool:last-child { width: 32px; }
.tool svg { width: 20px; height: 20px; }
.tool i { border-width: 4px 4px 0; }
.box { flex: 1; padding: 1px 0; border: 1px solid #7895a8; border-radius: 4px; background: #fff; }
.root, .list li { display: grid; align-items: center; height: 16px; white-space: nowrap; }
.root { grid-template-columns: 16px 1fr; gap: 3px; padding-left: 4px; }
.root svg, .list svg { width: 16px; height: 16px; }
.list { margin: 0; padding: 0; list-style: none; }
.list li { grid-template-columns: 24px 16px 1fr; }
.list li > span:last-child { padding-left: 3px; }
.list b { font: 10px/16px "DejaVu Sans Mono", monospace; }
.en { font: 10px/16px "DejaVu Sans Mono", monospace; }
.gut { position: relative; display: flex; align-items: center; justify-content: center; height: 16px; }
.gut::before { content: ""; position: absolute; left: 12px; right: 0; top: 8px; border-top: 1px dotted #9a9a9a; }
.gut::after { content: ""; position: absolute; left: 12px; top: 0; bottom: 0; border-left: 1px dotted #9a9a9a; }
.list li:last-child .gut::after { bottom: 7px; }
.gut button {
  z-index: 1;
  width: 9px;
  height: 9px;
  border: 1px solid #9db8cc;
  border-radius: 2px;
  background: linear-gradient(#223, #223) center / 5px 1px no-repeat, linear-gradient(#223, #223) center / 1px 5px no-repeat, #eef5fa;
}
.off { color: #b9b9b9; }
.off svg { background: #d8d5c8; filter: grayscale(.7); opacity: .5; }
.sash { display: flex; flex-direction: column; gap: 10px; padding: 163px 0 0 1px; }
.sash button { display: flex; align-items: center; justify-content: center; height: 93px; border: 1px solid #c2d2dd; border-right: 0; border-radius: 4px 0 0 4px; }
.sash button::before { content: ""; width: 3px; height: 3px; border-radius: 50%; background: #333; }
.sash .strong { border-color: #7f95a6; background: #d0e0ea; }

.view { flex: 1; min-width: 0; background: linear-gradient(#c4d8e8, #abc3dd 25%, #7f9dc8 65%, #587aae); }
.scene { display: block; width: 100%; height: 100%; }

.right { display: grid; grid-template: 15px auto / 28px 28px; column-gap: 13px; align-content: start; flex: none; width: 69px; background: #dce9f2; }
.hgrip { height: 5px; margin: 5px 0 4px; background: radial-gradient(circle at 1px 1px, #8a9eb8 1px, transparent 1px) 0 0 / 3px 3px; }
.wide { grid-column: 1 / 3; }
.col { display: flex; flex-direction: column; }
.col .hgrip { flex: none; }
.fly::after { content: ""; position: absolute; right: -8px; top: 11px; border: 3px solid transparent; border-left: 4px solid #222; border-right: 0; }

.brand {
  position: absolute;
  right: 5px;
  bottom: 6px;
  display: grid;
  grid-template: 38px 24px / 60px 1fr;
  column-gap: 11px;
  width: 206px;
  background: rgba(220, 233, 245, .35);
  pointer-events: none;
}
.logo { grid-area: 1 / 1 / 3 / 2; width: 60px; height: 60px; opacity: .8; }
.brand strong { grid-area: 1 / 2; color: #2c9c7c; opacity: .65; font: bold 29px/40px "Noto Sans CJK SC", sans-serif; white-space: nowrap; }
.brand em { grid-area: 2 / 1 / 3 / 3; justify-self: end; padding-right: 3px; color: #7fa8cc; opacity: .7; font: 15px/22px "Noto Sans", sans-serif; white-space: nowrap; }
.tol { position: absolute; left: 60px; top: 24px; width: 72px; margin: 0; color: #fff; font: 9px/10px "Liberation Mono", monospace; text-align: center; white-space: nowrap; }
```
